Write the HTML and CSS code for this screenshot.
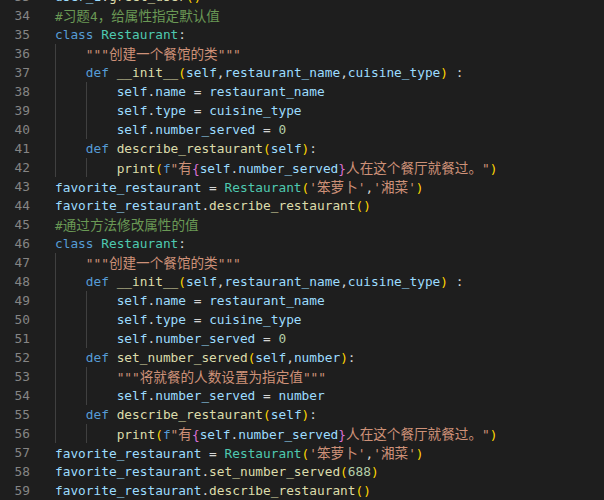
FILE: index.html
```html
<!DOCTYPE html>
<html>
<head>
<meta charset="utf-8">
<link rel="stylesheet" href="styles.css">
</head>
<body>
<div class="editor">
<div class="line"><span class="ln">33</span><span class="code"><span class="v">user_1</span>.<span class="f">greet_user</span><span class="p1">()</span></span></div>
<div class="line"><span class="ln">34</span><span class="code"><span class="cm">#<span class="zh">习题</span>4<span class="zh">，给属性指定默认值</span></span></span></div>
<div class="line"><span class="ln">35</span><span class="code"><span class="k">class</span> <span class="c">Restaurant</span>:</span></div>
<div class="line"><span class="ln">36</span><span class="code"><span class="ind"></span><span class="s">"""<span class="zh">创建一个餐馆的类</span>"""</span></span></div>
<div class="line"><span class="ln">37</span><span class="code"><span class="ind"></span><span class="k">def</span> <span class="f">__init__</span><span class="p1">(</span><span class="v">self</span>,<span class="v">restaurant_name</span>,<span class="v">cuisine_type</span><span class="p1">)</span> :</span></div>
<div class="line"><span class="ln">38</span><span class="code"><span class="ind"></span><span class="ind"></span><span class="v">self</span>.<span class="v">name</span> = <span class="v">restaurant_name</span></span></div>
<div class="line"><span class="ln">39</span><span class="code"><span class="ind"></span><span class="ind"></span><span class="v">self</span>.<span class="v">type</span> = <span class="v">cuisine_type</span></span></div>
<div class="line"><span class="ln">40</span><span class="code"><span class="ind"></span><span class="ind"></span><span class="v">self</span>.<span class="v">number_served</span> = <span class="n">0</span></span></div>
<div class="line"><span class="ln">41</span><span class="code"><span class="ind"></span><span class="k">def</span> <span class="f">describe_restaurant</span><span class="p1">(</span><span class="v">self</span><span class="p1">)</span>:</span></div>
<div class="line"><span class="ln">42</span><span class="code"><span class="ind"></span><span class="ind"></span><span class="f">print</span><span class="p1">(</span><span class="k">f</span><span class="s">"<span class="zh">有</span></span><span class="p2">{</span><span class="v">self</span>.<span class="v">number_served</span><span class="p2">}</span><span class="s"><span class="zh">人在这个餐厅就餐过。</span>"</span><span class="p1">)</span></span></div>
<div class="line"><span class="ln">43</span><span class="code"><span class="v">favorite_restaurant</span> = <span class="c">Restaurant</span><span class="p1">(</span><span class="s">'<span class="zh">笨萝卜</span>'</span>,<span class="s">'<span class="zh">湘菜</span>'</span><span class="p1">)</span></span></div>
<div class="line"><span class="ln">44</span><span class="code"><span class="v">favorite_restaurant</span>.<span class="f">describe_restaurant</span><span class="p1">()</span></span></div>
<div class="line"><span class="ln">45</span><span class="code"><span class="cm">#<span class="zh">通过方法修改属性的值</span></span></span></div>
<div class="line"><span class="ln">46</span><span class="code"><span class="k">class</span> <span class="c">Restaurant</span>:</span></div>
<div class="line"><span class="ln">47</span><span class="code"><span class="ind"></span><span class="s">"""<span class="zh">创建一个餐馆的类</span>"""</span></span></div>
<div class="line"><span class="ln">48</span><span class="code"><span class="ind"></span><span class="k">def</span> <span class="f">__init__</span><span class="p1">(</span><span class="v">self</span>,<span class="v">restaurant_name</span>,<span class="v">cuisine_type</span><span class="p1">)</span> :</span></div>
<div class="line"><span class="ln">49</span><span class="code"><span class="ind"></span><span class="ind"></span><span class="v">self</span>.<span class="v">name</span> = <span class="v">restaurant_name</span></span></div>
<div class="line"><span class="ln">50</span><span class="code"><span class="ind"></span><span class="ind"></span><span class="v">self</span>.<span class="v">type</span> = <span class="v">cuisine_type</span></span></div>
<div class="line"><span class="ln">51</span><span class="code"><span class="ind"></span><span class="ind"></span><span class="v">self</span>.<span class="v">number_served</span> = <span class="n">0</span></span></div>
<div class="line"><span class="ln">52</span><span class="code"><span class="ind"></span><span class="k">def</span> <span class="f">set_number_served</span><span class="p1">(</span><span class="v">self</span>,<span class="v">number</span><span class="p1">)</span>:</span></div>
<div class="line"><span class="ln">53</span><span class="code"><span class="ind"></span><span class="ind"></span><span class="s">"""<span class="zh">将就餐的人数设置为指定值</span>"""</span></span></div>
<div class="line"><span class="ln">54</span><span class="code"><span class="ind"></span><span class="ind"></span><span class="v">self</span>.<span class="v">number_served</span> = <span class="v">number</span></span></div>
<div class="line"><span class="ln">55</span><span class="code"><span class="ind"></span><span class="k">def</span> <span class="f">describe_restaurant</span><span class="p1">(</span><span class="v">self</span><span class="p1">)</span>:</span></div>
<div class="line"><span class="ln">56</span><span class="code"><span class="ind"></span><span class="ind"></span><span class="f">print</span><span class="p1">(</span><span class="k">f</span><span class="s">"<span class="zh">有</span></span><span class="p2">{</span><span class="v">self</span>.<span class="v">number_served</span><span class="p2">}</span><span class="s"><span class="zh">人在这个餐厅就餐过。</span>"</span><span class="p1">)</span></span></div>
<div class="line"><span class="ln">57</span><span class="code"><span class="v">favorite_restaurant</span> = <span class="c">Restaurant</span><span class="p1">(</span><span class="s">'<span class="zh">笨萝卜</span>'</span>,<span class="s">'<span class="zh">湘菜</span>'</span><span class="p1">)</span></span></div>
<div class="line"><span class="ln">58</span><span class="code"><span class="v">favorite_restaurant</span>.<span class="f">set_number_served</span><span class="p1">(</span><span class="n">688</span><span class="p1">)</span></span></div>
<div class="line"><span class="ln">59</span><span class="code"><span class="v">favorite_restaurant</span>.<span class="f">describe_restaurant</span><span class="p1">()</span></span></div>
</div>
</body>
</html>
```
FILE: styles.css
```css
html, body {
  margin: 0;
  padding: 0;
  background: #1e1e1e;
  overflow: hidden;
}
.editor {
  margin-top: -13px;
  font-family: "DejaVu Sans Mono", "Noto Sans CJK SC", monospace;
  font-size: 12.8px;
  line-height: 19px;
  color: #d4d4d4;
}
.line {
  display: flex;
  height: 19px;
  white-space: pre;
}
.ln {
  width: 30px;
  flex: none;
  text-align: right;
  color: #858585;
}
.code {
  display: block;
  margin-left: 25px;
  white-space: pre;
}
.ind {
  display: inline-block;
  width: 4ch;
  height: 19px;
  vertical-align: top;
  box-shadow: inset 1px 0 0 #404040;
}
.zh {
  font-family: "Noto Sans CJK SC", sans-serif;
  font-size: 13.6px;
  line-height: 19px;
}
.k { color: #569cd6; }
.c { color: #4ec9b0; }
.s { color: #ce9178; }
.v { color: #9cdcfe; }
.f { color: #dcdcaa; }
.n { color: #b5cea8; }
.cm { color: #6a9955; }
.p1 { color: #ffd700; }
.p2 { color: #da70d6; }
```
